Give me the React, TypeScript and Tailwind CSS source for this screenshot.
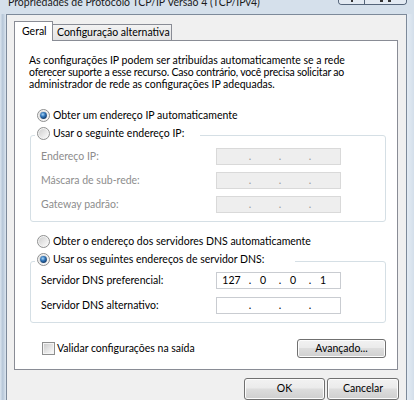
import React from "react";

function Radio({ checked = false }: { checked?: boolean }) {
  return (
    <svg width="13" height="13" viewBox="0 0 13 13" className="shrink-0">
      <defs>
        <linearGradient id="rfill" x1="0" y1="0" x2="1" y2="1">
          <stop offset="0" stopColor="#cfcfcf" />
          <stop offset="1" stopColor="#fbfbfb" />
        </linearGradient>
        <radialGradient id="rdot" cx="0.4" cy="0.35" r="0.75">
          <stop offset="0" stopColor="#a8d6f8" />
          <stop offset="0.45" stopColor="#2f74b8" />
          <stop offset="1" stopColor="#0c2c55" />
        </radialGradient>
      </defs>
      <circle cx="6.5" cy="6.5" r="6" fill="#f4f4f4" stroke="#8e8f8f" />
      <circle cx="6.5" cy="6.5" r="4.6" fill="url(#rfill)" />
      {checked && <circle cx="6.5" cy="6.5" r="3.4" fill="url(#rdot)" />}
    </svg>
  );
}

function Checkbox() {
  return (
    <div className="flex h-[13px] w-[13px] shrink-0 items-center justify-center border border-[#8e8f8f] bg-[#f4f4f4]">
      <div className="h-[9px] w-[9px] bg-[linear-gradient(135deg,#cdcdcd,#f9f9f9)]" />
    </div>
  );
}

function IpField({ v = ["", "", "", ""], disabled = false }: { v?: string[]; disabled?: boolean }) {
  return (
    <div
      className={
        disabled
          ? "flex h-[17px] w-[125px] items-center border border-[#d9d9d9] bg-[#eeeeee] text-[#9a9a9a]"
          : "flex h-[17px] w-[125px] items-center border border-[#c9ccd1] bg-white text-black"
      }
    >
      <span className="w-[29px] text-center">{v[0]}</span>
      <span className="w-[8px] text-center">.</span>
      <span className="w-[22px] pr-[4px] text-center">{v[1]}</span>
      <span className="w-[8px] text-center">.</span>
      <span className="w-[22px] pr-[4px] text-center">{v[2]}</span>
      <span className="w-[8px] text-center">.</span>
      <span className="w-[22px] pr-[4px] text-center">{v[3]}</span>
    </div>
  );
}

function Button({ label, w }: { label: string; w: string }) {
  return (
    <div
      className={
        w +
        " flex items-center justify-center rounded-[3px] border border-[#707070] bg-[linear-gradient(#f2f2f2,#ebebeb_45%,#dddddd_50%,#cfcfcf)] shadow-[inset_0_0_0_1px_#fcfcfc] text-black"
      }
    >
      {label}
    </div>
  );
}

export default function App() {
  return (
    <div className="h-[400px] w-[414px] overflow-hidden bg-[#d5e0eb] font-['Lato',sans-serif] text-[10.5px] text-black">
      {/* title bar */}
      <div className="flex h-[14px] items-start">
        <span className="mt-[-4px] whitespace-nowrap pl-[8px] text-[10.5px] leading-[12px] text-[#1b1b1b]">
          Propriedades de Protocolo TCP/IP Versão 4 (TCP/IPv4)
        </span>
        <div className="ml-auto mr-[7px] flex h-[5px] overflow-hidden rounded-b-[4px] border border-t-0 border-[#55657a]">
          <div className="flex h-full w-[25px] justify-center bg-[#e3eaf2]">
            <div className="h-[2px] w-[2px] bg-[#333]" />
          </div>
          <div className="flex h-full w-[42px] justify-center gap-[5px] border-l border-[#55657a] bg-[#e3eaf2]">
            <div className="h-[2px] w-[3px] bg-[#333]" />
            <div className="h-[2px] w-[3px] bg-[#333]" />
          </div>
        </div>
      </div>

      <div className="flex h-[386px]">
        <div className="w-[6px] bg-[linear-gradient(90deg,#dbe5ef,#b7c7d8_45%,#dce6f0)]" />
        {/* client */}
        <div className="flex w-[401px] flex-col border-x border-t border-[#7d8a9a] bg-[#f0f0f0] pl-[7px] pt-[6px]">
          {/* tabs */}
          <div className="flex items-end">
            <div className="relative z-10 -mb-px flex h-[20px] w-[39px] items-center border-x border-t border-[#898c95] bg-white pl-[7px]">
              Geral
            </div>
            <div className="flex h-[16px] w-[119px] items-center whitespace-nowrap border-r border-t border-[#898c95] bg-[linear-gradient(#f3f3f3,#e3e3e3)] pl-[4px]">
              Configuração alternativa
            </div>
          </div>

          {/* panel */}
          <div className="h-[332px] w-[384px] border border-[#898c95] bg-white">
            <p className="ml-[14px] mt-[13px] whitespace-nowrap leading-[12px]">
              As configurações IP podem ser atribuídas automaticamente se a rede
              <br />
              <span className="tracking-[-0.2px]">oferecer suporte a esse recurso. Caso contrário, você precisa solicitar ao</span>
              <br />
              administrador de rede as configurações IP adequadas.
            </p>

            <div className="ml-[22px] mt-[19px] flex h-[13px] items-center gap-[3px]">
              <Radio checked />
              <span>Obter um endereço IP automaticamente</span>
            </div>

            <fieldset className="ml-[15px] mt-[5px] w-[356px] rounded-[3px] border border-[#d5dfe5] pb-[8px]">
              <legend className="ml-[4px] w-[165px] pb-[3px] pl-[2px]">
                <div className="flex h-[13px] items-center gap-[3px]">
                  <Radio />
                  <span>Usar o seguinte endereço IP:</span>
                </div>
              </legend>
              <div className="ml-[10px] mt-[5px] flex items-center">
                <span className="w-[175px] text-[#8d8d8d]">Endereço IP:</span>
                <IpField disabled />
              </div>
              <div className="ml-[10px] mt-[7px] flex items-center">
                <span className="w-[175px] text-[#8d8d8d]">Máscara de sub-rede:</span>
                <IpField disabled />
              </div>
              <div className="ml-[10px] mt-[7px] flex items-center">
                <span className="w-[175px] text-[#8d8d8d]">Gateway padrão:</span>
                <IpField disabled />
              </div>
            </fieldset>

            <div className="ml-[22px] mt-[13px] flex h-[13px] items-center gap-[3px]">
              <Radio />
              <span>Obter o endereço dos servidores DNS automaticamente</span>
            </div>

            <fieldset className="ml-[15px] mt-[5px] w-[356px] rounded-[3px] border border-[#d5dfe5] pb-[8px]">
              <legend className="ml-[4px] w-[260px] pb-[3px] pl-[2px]">
                <div className="flex h-[13px] items-center gap-[3px]">
                  <Radio checked />
                  <span>Usar os seguintes endereços de servidor DNS:</span>
                </div>
              </legend>
              <div className="ml-[10px] mt-[3px] flex items-center">
                <span className="w-[175px]">Servidor DNS preferencial:</span>
                <IpField v={["127", "0", "0", "1"]} />
              </div>
              <div className="ml-[10px] mt-[8px] flex items-center">
                <span className="w-[175px]">Servidor DNS alternativo:</span>
                <IpField />
              </div>
            </fieldset>

            <div className="ml-[27px] mr-[11px] mt-[16px] flex h-[19px] items-center justify-between">
              <div className="flex items-center gap-[2px]">
                <Checkbox />
                <span>Validar configurações na saída</span>
              </div>
              <Button label="Avançado..." w="h-[19px] w-[89px]" />
            </div>
          </div>

          {/* dialog buttons */}
          <div className="mt-[8px] flex justify-end gap-[2px] pr-[7px]">
            <Button label="OK" w="h-[22px] w-[81px]" />
            <Button label="Cancelar" w="h-[22px] w-[72px]" />
          </div>
        </div>
        <div className="w-[7px] bg-[linear-gradient(90deg,#e4ecf4,#d3deea)]" />
      </div>
    </div>
  );
}
